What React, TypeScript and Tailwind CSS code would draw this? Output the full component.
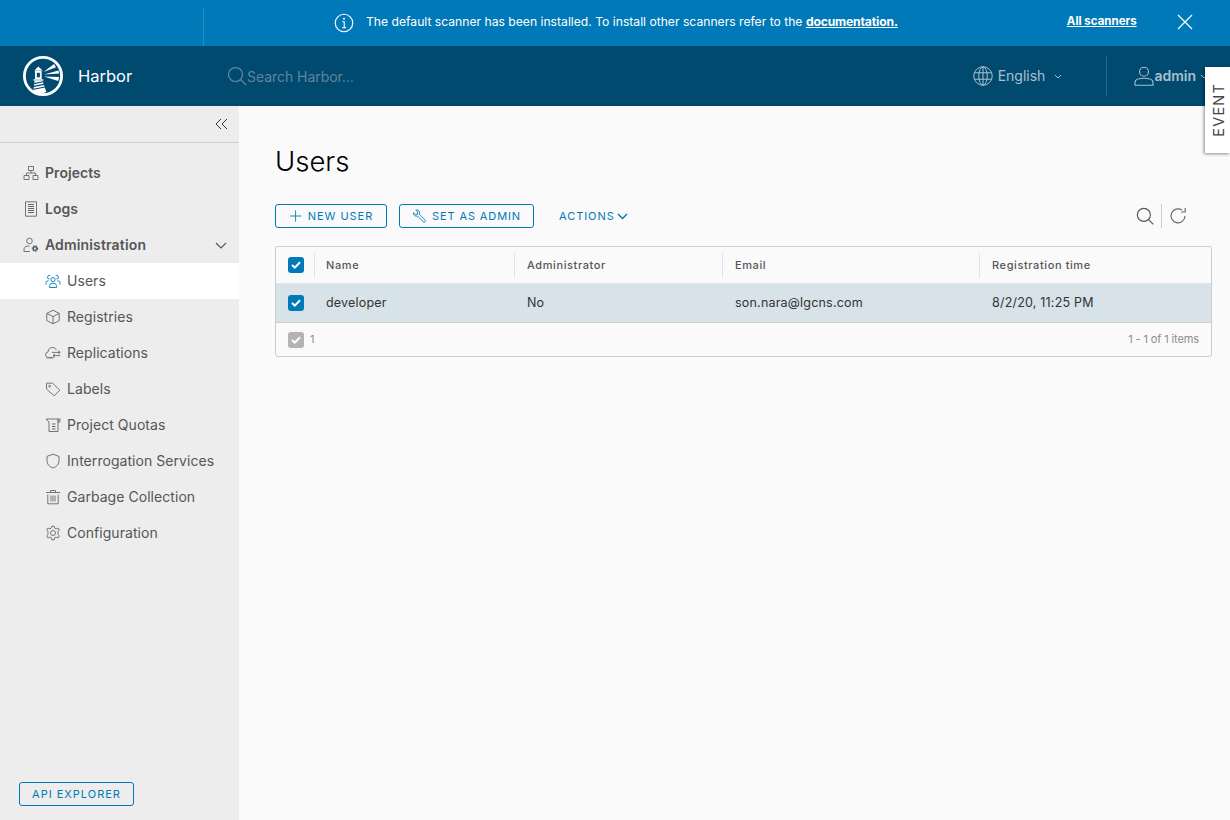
import { ReactNode } from 'react';

const Icon = ({ size = 16, className = '', stroke = 1, children }: { size?: number; className?: string; stroke?: number; children: ReactNode }) => (
  <svg width={size} height={size} viewBox="0 0 16 16" fill="none" stroke="currentColor" strokeWidth={stroke} className={className}>
    {children}
  </svg>
);

const HarborLogo = () => (
  <svg width="42" height="42" viewBox="0 0 42 42" className="shrink-0">
    <circle cx="21" cy="21" r="18.6" fill="none" stroke="#fff" strokeWidth="2.8" />
    <path d="M16.3 11.5 L20.7 15.6 H12.3 Z" fill="#fff" />
    <path d="M13 15.6 H19.7 V24.3 H13 Z" fill="#fff" />
    <path d="M14.8 17.8 H17.9 V22.3 H14.8 Z" fill="#004a70" />
    <path d="M11.4 24.3 H21.3 V25.6 H11.4 Z" fill="#fff" />
    <path d="M12.6 25.6 H20.4 L24.4 37 L19 39 L11.4 36.4 Z" fill="#fff" />
    <path d="M12.2 28.6 L21 26.8 M12 31.4 L22 29.4 M11.8 34.2 L23 32" stroke="#004a70" strokeWidth="1.1" />
    <path d="M21.5 17 L32 9 L34 12.2 Z M22 19.6 L36.5 15.4 L37.2 18.6 Z M22 21.6 L37.2 22 L36.2 26 Z" fill="#fff" />
  </svg>
);

const CheckBox = ({ color = 'bg-[#0079b8]' }: { color?: string }) => (
  <span className={`flex h-4 w-4 items-center justify-center rounded-[3px] ${color}`}>
    <svg width="10" height="8" viewBox="0 0 10 8" fill="none" stroke="#fff" strokeWidth="2">
      <path d="M1 4 L3.8 6.6 L9 1.2" />
    </svg>
  </span>
);

const subItems: { label: string; active?: boolean; icon: ReactNode }[] = [
  {
    label: 'Users',
    active: true,
    icon: (
      <>
        <circle cx="8" cy="6.6" r="2.1" />
        <path d="M4.6 14.5 V12.4 Q4.6 10.2 8 10.2 Q11.4 10.2 11.4 12.4 V14.5 Z" />
        <path d="M5.2 2.6 A1.8 1.8 0 1 0 4.4 6 M10.8 2.6 A1.8 1.8 0 1 1 11.6 6" />
        <path d="M1 11.5 V9.6 Q1 7.8 3.6 7.8 M15 11.5 V9.6 Q15 7.8 12.4 7.8" />
      </>
    ),
  },
  {
    label: 'Registries',
    icon: (
      <>
        <path d="M8 1.2 L14.2 4.4 V11.6 L8 14.8 L1.8 11.6 V4.4 Z" />
        <path d="M1.8 4.4 L8 7.6 L14.2 4.4 M8 7.6 V14.8" />
      </>
    ),
  },
  {
    label: 'Replications',
    icon: (
      <>
        <path d="M8.5 12.5 H3.2 Q0.6 12.5 0.6 9.6 Q0.6 7.2 3 7 Q3.4 2.4 7.6 2.4 Q10.4 2.4 11.4 5" />
        <path d="M7 7.4 H15.2 M13 5.6 L15.2 7.4 L13 9.2 M15.2 10.6 H8 M10 8.9 L8 10.6 L10 12.3" />
        <path d="M1 13.6 H8.5" strokeOpacity="0.4" />
      </>
    ),
  },
  {
    label: 'Labels',
    icon: (
      <>
        <path d="M1.5 2.2 H7.6 L14.8 9.2 L9.2 14.8 L1.5 8 Z" />
        <circle cx="4.6" cy="5.2" r="0.9" />
      </>
    ),
  },
  {
    label: 'Project Quotas',
    icon: (
      <>
        <path d="M1 2 H15 V5 H13 V14.5 H4 V5 L1 2" />
        <path d="M7 7 H10.5 M7 9.5 H10.5 M7 12 H10.5 M13 2 V5" strokeWidth="1.2" />
      </>
    ),
  },
  {
    label: 'Interrogation Services',
    icon: <path d="M8 1.2 L14 3.4 V8 Q14 12.6 8 15 Q2 12.6 2 8 V3.4 Z" />,
  },
  {
    label: 'Garbage Collection',
    icon: (
      <>
        <path d="M1 3.5 H15 M5.5 3.5 V1.5 H10.5 V3.5 M2.8 5.5 V14.8 H13.2 V5.5" />
        <path d="M6 6.5 V12.5 M8 6.5 V12.5 M10 6.5 V12.5" />
      </>
    ),
  },
  {
    label: 'Configuration',
    icon: (
      <>
        <circle cx="8" cy="8" r="2.5" />
        <path d="M6.8 1.2 H9.2 L9.6 3.1 L11.2 3.9 L13 3 L14.4 5.1 L13 6.4 V8 V9.6 L14.4 10.9 L13 13 L11.2 12.1 L9.6 12.9 L9.2 14.8 H6.8 L6.4 12.9 L4.8 12.1 L3 13 L1.6 10.9 L3 9.6 V6.4 L1.6 5.1 L3 3 L4.8 3.9 L6.4 3.1 Z" />
      </>
    ),
  },
];

const columns = [
  { label: 'Name', value: 'developer', width: 'w-[200px]', pad: 'pl-[11px]' },
  { label: 'Administrator', value: 'No', width: 'w-[208px]', pad: 'pl-3' },
  { label: 'Email', value: 'son.nara@lgcns.com', width: 'w-[257px]', pad: 'pl-3' },
  { label: 'Registration time', value: '8/2/20, 11:25 PM', width: 'flex-1', pad: 'pl-3' },
];

export default function App() {
  return (
    <div className="relative flex h-[820px] w-[1230px] flex-col overflow-hidden bg-[#fafafa] font-['Inter','Liberation_Sans',sans-serif] text-[#565656]">
      {/* scanner banner */}
      <div className="flex h-[46px] shrink-0 bg-[#0079b8] text-white">
        <div className="mt-2 h-[38px] w-[204px] shrink-0 border-r border-white/15" />
        <div className="flex flex-1 items-center">
          <Icon size={20} className="ml-[130px]" stroke={0.9}>
            <circle cx="8" cy="8" r="7" />
            <circle cx="8" cy="4.6" r="0.8" fill="currentColor" stroke="none" />
            <path d="M6.6 7 H8.2 V11.6 M6.4 11.8 H9.8" />
          </Icon>
          <span className="ml-3 -mt-[2px] text-[12.15px]">
            The default scanner has been installed. To install other scanners refer to the{' '}
            <a className="font-bold tracking-[-0.15px] underline">documentation.</a>
          </span>
          <a className="ml-[169px] -mt-[2px] text-[11.5px] font-bold underline">All scanners</a>
          <svg width="16" height="16" viewBox="0 0 16 16" stroke="#fff" strokeWidth="1.3" className="ml-10 -mt-[2px]">
            <path d="M1 1 L15 15 M15 1 L1 15" />
          </svg>
        </div>
      </div>

      {/* header */}
      <header className="flex h-[60px] shrink-0 items-center bg-[#004a70] text-white">
        <div className="ml-[22px] w-[205px] shrink-0">
          <div className="flex items-center gap-[14px]">
            <HarborLogo />
            <span className="text-[16.5px]">Harbor</span>
          </div>
        </div>
        <div className="flex items-center text-[#5f859c]">
          <Icon size={20} className="mt-[-1px]">
            <circle cx="6.8" cy="6.8" r="5.6" />
            <path d="M10.8 10.8 L15.4 15.2" />
          </Icon>
          <span className="text-[14px] tracking-[-0.05px]">Search Harbor...</span>
        </div>
        <div className="ml-auto flex items-center text-[#a8c0ce]">
          <Icon size={20} stroke={0.8}>
            <circle cx="8" cy="8" r="7.4" />
            <ellipse cx="8" cy="8" rx="3.4" ry="7.4" />
            <path d="M8 0.6 V15.4 M1.2 5.4 H14.8 M1.2 10.6 H14.8" />
          </Icon>
          <span className="ml-[5px] -mt-px text-[14px]">English</span>
          <svg width="8" height="5" viewBox="0 0 8 5" fill="none" stroke="currentColor" className="ml-[9px]">
            <path d="M1 1 L4 4 L7 1" />
          </svg>
          <div className="ml-[44px] h-10 border-l border-white/15" />
          <Icon size={20} className="ml-[27px]" stroke={0.9}>
            <circle cx="8" cy="4.6" r="3.6" />
            <path d="M0.8 15.4 V13 Q0.8 9.8 8 9.8 Q15.2 9.8 15.2 13 V15.4 Z" />
          </Icon>
          <span className="-mt-px text-[14px] font-semibold">admin</span>
          <svg width="8" height="5" viewBox="0 0 8 5" fill="none" stroke="currentColor" className="ml-1 mr-[22px]">
            <path d="M1 1 L4 4 L7 1" />
          </svg>
        </div>
      </header>

      <div className="flex min-h-0 flex-1">
        {/* sidebar */}
        <aside className="flex w-[239px] shrink-0 flex-col bg-[#ededed]">
          <div className="flex h-[37px] shrink-0 items-center justify-end border-b border-[#ccc] pr-[11px] text-[#333]">
            <svg width="13" height="12" viewBox="0 0 13 12" fill="none" stroke="currentColor">
              <path d="M6 1 L1 6 L6 11 M12 1 L7 6 L12 11" />
            </svg>
          </div>
          <nav className="mt-3 flex flex-col text-[14px] tracking-[0.05px] text-[#565656]">
            <a className="flex h-9 items-center pl-[23px] font-semibold">
              <Icon className="text-[#666]" stroke={0.9}>
                <path d="M5.5 1.5 H10.5 V5.5 H5.5 Z M1 10.5 H6 V14.5 H1 Z M10 10.5 H15 V14.5 H10 Z" />
                <path d="M8 5.5 V8 M3.5 10.5 V8 H12.5 V10.5" />
              </Icon>
              <span className="ml-[6px] -mt-[2px]">Projects</span>
            </a>
            <a className="flex h-9 items-center pl-[23px] font-semibold">
              <Icon className="text-[#666]" stroke={0.9}>
                <path d="M2.5 0.8 H13.5 V15.2 H2.5 Z" />
                <path d="M5 3.5 H11 M5 5.5 H11 M5 7.5 H11 M5 9.5 H11 M5 11.5 H11" strokeWidth="1.1" />
              </Icon>
              <span className="ml-[6px] -mt-[2px]">Logs</span>
            </a>
            <a className="flex h-9 items-center pl-[23px] pr-[12px] font-semibold">
              <Icon className="text-[#666]" stroke={0.9}>
                <circle cx="6.5" cy="4" r="2.8" />
                <path d="M1 14.5 V12 Q1 9 6.5 9 M1 14.5 H7" />
                <circle cx="12" cy="11.5" r="2.4" fill="currentColor" stroke="currentColor" strokeWidth="1.6" strokeDasharray="1.4 0.7" />
                <circle cx="12" cy="11.5" r="1" fill="#ededed" stroke="none" />
              </Icon>
              <span className="ml-[6px] -mt-[2px] tracking-[0.15px]">Administration</span>
              <svg width="12" height="7" viewBox="0 0 12 7" fill="none" stroke="#555" strokeWidth="1.1" className="ml-auto">
                <path d="M1 1 L6 6 L11 1" />
              </svg>
            </a>
            {subItems.map((item) => (
              <a key={item.label} className={`flex h-9 items-center pl-[45px] ${item.active ? 'bg-white' : ''}`}>
                <Icon stroke={0.9} className={item.active ? 'text-[#0079b8]' : 'text-[#666]'}>
                  {item.icon}
                </Icon>
                <span className="ml-[6px] -mt-[2px]">{item.label}</span>
              </a>
            ))}
          </nav>
          <button className="mb-[14px] ml-[19px] mt-auto h-6 w-[115px] rounded-[3px] border border-[#0079b8] text-[11px] tracking-[1px] text-[#0079b8]">
            API EXPLORER
          </button>
        </aside>

        {/* main */}
        <main className="min-w-0 flex-1 pl-9 pr-[18px] pt-[38px]">
          <h1 className="text-[27.5px] leading-[34px] font-light text-black">Users</h1>
          <div className="mt-[26px] flex h-6 items-center text-[#0079b8]">
            <button className="flex h-6 w-[112px] items-center justify-center rounded-[3px] border border-[#0079b8] text-[11px] tracking-[0.95px]">
              <Icon size={14} className="mr-[5px]">
                <path d="M7.5 1.5 V14.5 M1 8 H14" />
              </Icon>
              NEW USER
            </button>
            <button className="ml-3 flex h-6 w-[135px] items-center justify-center rounded-[3px] border border-[#0079b8] text-[11px] tracking-[0.9px]">
              <Icon size={15} className="mr-[5px]" stroke={0.9}>
                <path d="M1.5 4 L4 6 L6 5.5 L6 3 L4 1 Q7 0.4 8 3 Q8.4 4.4 7.6 5.4 L14.6 12.4 L12.8 14.4 L5.8 7.4 Q4.4 8 3 7.2 Q1.2 6 1.5 4 Z" />
              </Icon>
              SET AS ADMIN
            </button>
            <button className="ml-[25px] flex items-center text-[11px] tracking-[0.95px]">
              ACTIONS
              <svg width="11" height="7" viewBox="0 0 11 7" fill="none" stroke="currentColor" strokeWidth="1.4" className="ml-[2px]">
                <path d="M1 1 L5.5 5.5 L10 1" />
              </svg>
            </button>
            <div className="ml-auto mr-[25px] flex items-center text-[#555]">
              <Icon size={18}>
                <circle cx="7" cy="7" r="5.8" />
                <path d="M11.2 11.2 L15.4 15.4" />
              </Icon>
              <div className="ml-[7px] mr-[5px] h-6 border-l border-[#ccc]" />
              <Icon size={18} className="ml-[2px] text-[#666]">
                <path d="M14.2 8 A6.2 6.2 0 1 1 11.6 2.8" />
                <path d="M14.4 0.8 V4.4 H10.8" />
              </Icon>
            </div>
          </div>

          {/* datagrid */}
          <div className="mt-[18px] flex h-[111px] flex-col rounded-[3px] border border-[#ccc]">
            <div className="flex h-[37px] shrink-0 items-center border-b border-[#e4e4e4] text-[11px] font-medium tracking-[0.6px] text-[#565656]">
              <div className="flex w-[38px] shrink-0 justify-center pl-px">
                <CheckBox />
              </div>
              {columns.map((col) => (
                <div key={col.label} className={`${col.width} ${col.pad} border-l border-[#e4e4e4] py-[6px] leading-[13px]`}>
                  {col.label}
                </div>
              ))}
            </div>
            <div className="flex h-[39px] shrink-0 items-center border-b border-[#ccc] bg-[#d8e3e9] text-[12.5px] tracking-[0.2px] text-[#333]">
              <div className="flex w-[38px] shrink-0 justify-center pl-px">
                <CheckBox />
              </div>
              {columns.map((col) => (
                <div key={col.label} className={`${col.width} ${col.pad} border-l border-transparent`}>
                  {col.value}
                </div>
              ))}
            </div>
            <div className="flex flex-1 items-center pl-3 pr-3 text-[11px] text-[#8c8c8c]">
              <CheckBox color="bg-[#b3b3b3]" />
              <span className="ml-[6px]">1</span>
              <span className="ml-auto tracking-[-0.12px]">1 - 1 of 1 items</span>
            </div>
          </div>
        </main>
      </div>

      {/* event tab sits over the header */}
      <div className="absolute right-0 top-[67px] flex h-[86px] w-[25px] items-center justify-center bg-white pl-[3px] shadow-[-1px_1px_3px_rgba(0,0,0,0.45)]">
        <span className="-rotate-90 whitespace-nowrap text-[14.5px] tracking-[1.2px] text-[#444]">EVENT</span>
      </div>
    </div>
  );
}
